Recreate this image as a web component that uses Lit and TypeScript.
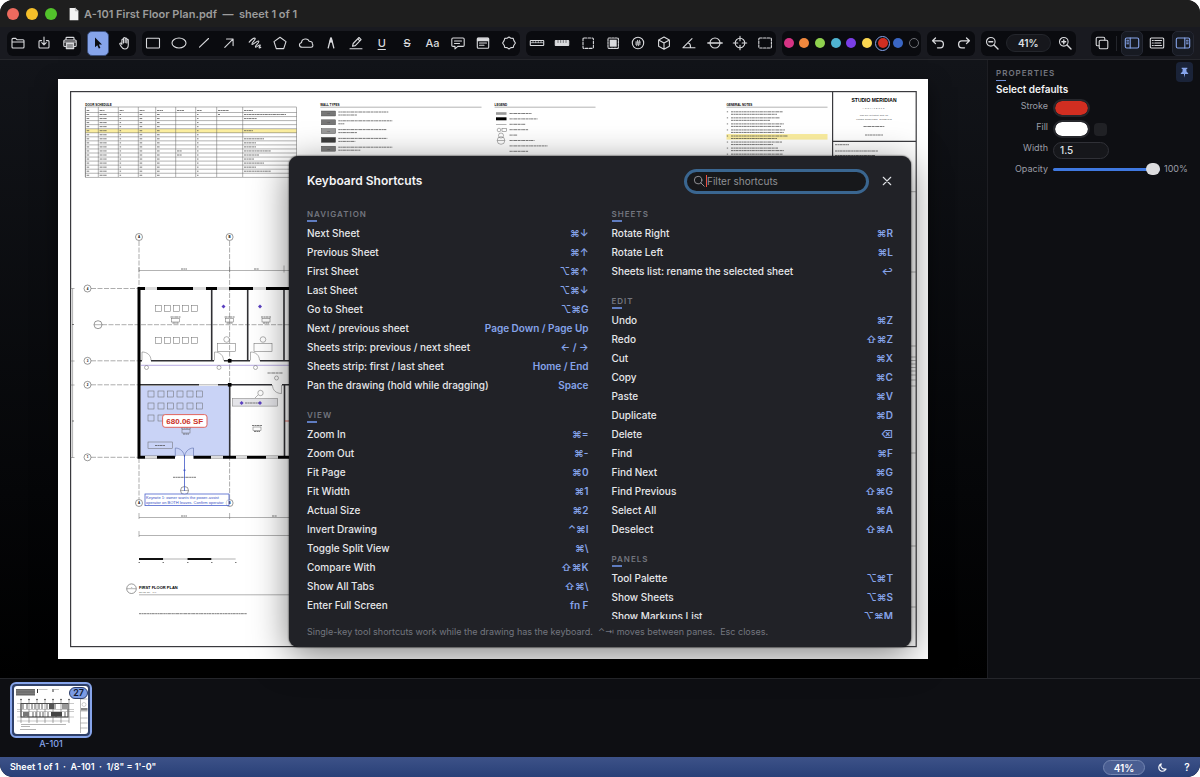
import { LitElement, html, svg, css, nothing, type TemplateResult } from "lit";
import { customElement } from "lit/decorators.js";
import { classMap } from "lit/directives/class-map.js";
import { styleMap } from "lit/directives/style-map.js";

const ICONS: Record<string, TemplateResult> = {
  folder: svg`<path d="M2 12V4.400c0-.6.4-1 1-1h2.700l1.400 1.400H13c.6 0 1 .4 1 1V12c0 .6-.4 1-1 1H3c-.6 0-1-.4-1-1zM2 7h12"/>`,
  save: svg`<path d="M5.600 5.600H4c-.6 0-1 .4-1 1V12c0 .6.4 1 1 1h8c.6 0 1-.4 1-1V6.600c0-.6-.4-1-1-1h-1.600M8 2v7.600M5.800 7.600L8 9.800l2.200-2.200"/>`,
  print: svg`<path d="M4 5V3.200c0-.5.300-.8.800-.8h6.400c.5 0 .8.300.8.800V5M4 11.500H2.800c-.6 0-1-.4-1-1V6c0-.6.4-1 1-1h10.400c.6 0 1 .4 1 1v4.500c0 .6-.4 1-1 1H12M2 7h12"/><path d="M4.300 8h7.400v5.600H4.300z" fill="currentColor"/><path d="M5.500 10h5M5.500 12h5" stroke="#0b0c10" stroke-width=".7"/>`,
  cursor: svg`<path d="M5 2.500v9.800l2.300-2.100 1.500 3.400 1.600-.7-1.500-3.300H12z" fill="currentColor" stroke="none"/>`,
  hand: svg`<path d="M4.900 9.200V5.100c0-1.300 1.600-1.300 1.600 0V8M6.500 7.500V3.600c0-1.400 1.700-1.400 1.700 0v4M8.200 7.500V3.900c0-1.300 1.600-1.300 1.600 0v4M9.800 8V5.300c0-1.200 1.500-1.200 1.500 0v4.500c0 2.600-1.300 4.200-3.500 4.200-1.900 0-2.800-.9-3.600-2.400L2.900 9.200c-.5-1 .8-1.600 1.400-.7l.6.9"/>`,
  rect: svg`<rect x="1.500" y="3.200" width="13" height="9.800" rx=".8"/>`,
  ellipse: svg`<ellipse cx="8" cy="8" rx="7" ry="5"/>`,
  line: svg`<path d="M3.500 12.200l9-8.700"/>`,
  arrow: svg`<path d="M3.800 12.300l8.200-8.200M5.500 4h6.600v6.600"/>`,
  scribble: svg`<path d="M2.200 7.200C4.500 4.600 6.800 2.600 8 3.300c1.200.9-3.900 5-3 6 .9.900 5.400-4.200 6.700-3.100 1.100 1-4.200 4.700-3.200 5.800.9.900 3.500-2.800 4.600-2 .8.7-1.600 2.100-.9 2.800.4.400 1.100-.1 1.600-.5"/>`,
  pentagon: svg`<path d="M8 2.200l6 4.400-2.300 7H4.300L2 6.600z"/>`,
  cloud: svg`<path d="M4.300 12.300c-3.500 0-3.800-4.300-.8-4.600.2-4.600 6.700-4.800 7.500-1.500 3 0 3.600 1.700 3.300 2.700 1.200 1 .6 3.400-1.400 3.400z"/>`,
  nib: svg`<path d="M7.600 3.500L5.200 12.800M8.400 3.500l2.400 9.300" stroke-width="1.300"/><path d="M7.500 2.300h1l1.200 4.700L8 7.800 6.300 7z" fill="currentColor" stroke="none"/>`,
  pencil: svg`<path d="M2 13.800h12M4.500 11.300l.7-2.800 5.800-6 2.100 2.100-5.800 6zM9.800 3.900l2 2"/>`,
  comment: svg`<path d="M3 3h10c.8 0 1.200.4 1.200 1.200v6c0 .8-.4 1.200-1.200 1.200H7.800L5 13.800v-2.400H3c-.8 0-1.200-.4-1.200-1.200v-6C1.800 3.400 2.200 3 3 3zM4.500 6h7M4.500 8.500h5"/>`,
  note: svg`<rect x="2.300" y="3" width="11.400" height="10.200" rx="1"/><path d="M2.500 3.300h11v2.300h-11z" fill="currentColor"/><path d="M4.500 8h7M4.500 10.300h4.500"/>`,
  seal: svg`<path d="M8 2l1.900 1.300 2.300.1.700 2.200L14.400 8l-1.500 2.200-.7 2.300-2.300.1L8 14l-1.900-1.400-2.300-.1-.7-2.300L1.600 8l1.500-2.400.7-2.200 2.300-.1z"/>`,
  ruler: svg`<rect x="1.300" y="5.500" width="13.400" height="5" rx=".6"/><path d="M4 5.700v2M6.700 5.700v2M9.300 5.700v2M12 5.700v2M2 7.700h12" stroke-width=".7"/>`,
  rulerFill: svg`<rect x="1.300" y="5.500" width="13.400" height="5" rx=".6" fill="currentColor"/><path d="M4 5.500v2M6.700 5.500v2M9.300 5.500v2M12 5.500v2" stroke="#0b0c10" stroke-width=".5"/>`,
  dashSquare: svg`<rect x="3" y="3" width="10.400" height="10.400" rx="1" stroke-dasharray="2.600 1.400"/>`,
  dashFill: svg`<rect x="3" y="3" width="10.400" height="10.400" rx="1" stroke-dasharray="2 1"/><path d="M4.700 4.700h7v7h-7z" fill="currentColor" stroke="none"/>`,
  hash: svg`<circle cx="8" cy="8" r="5.700"/><path d="M7.500 5.300l-.8 5.400M9.400 5.300l-.8 5.400M5.600 7.100h5M5.400 9h5" stroke-width=".9"/>`,
  cube: svg`<path d="M8 2l5.400 3v6.200L8 14.200l-5.400-3V5zM2.600 5L8 8l5.400-3M8 8v6"/>`,
  angle: svg`<path d="M14 12.700H2l9-9M7.200 7.800c1.500.7 2.500 2.600 2.300 4.700"/>`,
  diameter: svg`<circle cx="8" cy="8" r="5"/><path d="M.8 8h14.400" stroke-width="1.300"/>`,
  target: svg`<circle cx="8" cy="8" r="4.800"/><path d="M8 1.300v4.500M8 10.200v4.500M1.300 8h4.500M10.200 8h4.500"/>`,
  dashRect: svg`<rect x="1.800" y="3" width="12.600" height="10" rx="1" stroke-dasharray="2.400 1.300"/>`,
  undo: svg`<path d="M5.500 3L2.600 5.800l2.900 2.800M2.800 5.800h7.400c2 0 3.200 1.500 3.200 3.400s-1.200 3.600-3.200 3.600H7.500" stroke-width="1.300"/>`,
  redo: svg`<path d="M10.500 3l2.900 2.800-2.900 2.800M13.200 5.800H5.800c-2 0-3.200 1.500-3.200 3.400s1.200 3.600 3.200 3.600h2.700" stroke-width="1.300"/>`,
  zoomOut: svg`<circle cx="6.800" cy="6.800" r="4.300"/><path d="M10 10l4 4M4.900 6.800h3.800" stroke-width="1.400"/>`,
  zoomIn: svg`<circle cx="6.800" cy="6.800" r="4.300"/><path d="M10 10l4 4M4.900 6.800h3.800M6.800 4.900v3.800" stroke-width="1.400"/>`,
  copies: svg`<rect x="5.200" y="5.200" width="8.600" height="8.600" rx="1.400"/><path d="M5 10.800H3.600c-.9 0-1.400-.5-1.400-1.400V3.600c0-.9.5-1.400 1.400-1.400h5.800c.9 0 1.400.5 1.400 1.400V5"/>`,
  panelLeft: svg`<rect x="1.300" y="3" width="13.400" height="10" rx="1.400"/><path d="M6.200 3v10M2.900 5.200h1.600M2.900 7h1.600M2.900 8.800h1.600"/>`,
  listPanel: svg`<rect x="1.300" y="3" width="13.400" height="10" rx="1"/><path d="M3.300 5.500h1M3.300 8h1M3.300 10.500h1M5.800 5.500h6.800M5.800 8h6M5.800 10.500h6.800"/>`,
  panelRight: svg`<rect x="1.300" y="3" width="13.400" height="10" rx="1.400"/><path d="M9.800 3v10M11.500 5.200h1.600M11.500 7h1.600M11.500 8.800h1.600"/>`,
  search: svg`<circle cx="6.800" cy="6.800" r="5"/><path d="M10.500 10.500l4.500 4.500"/>`,
  close: svg`<path d="M3 3l10 10M13 3L3 13" stroke-width="1.500"/>`,
  pin: svg`<path d="M4.500 2h7v1.300l-1.300.8.5 3.300c1.300.6 1.900 1.300 1.900 2.500H8.700L8 14.500 7.300 9.900H3.400c0-1.200.6-1.900 1.900-2.500l.5-3.300-1.300-.8z" fill="currentColor" stroke="none"/>`,
  moon: svg`<path d="M6.200 2.500C4 6.500 7 11.200 13.300 10.200 10 15.500 2.800 14 2.600 8.500c0-2.700 1.500-5 3.600-6z"/>`,
  doc: svg`<path d="M3 1h6.500L13 4.500V15H3z" fill="#f2f2f2" stroke="none"/><path d="M9.500 1v3.500H13" fill="#c4c4c4" stroke="#aaa" stroke-width=".6"/>`,
};

const icon = (name: string, cls = "") => html`
  <svg class="icon ${cls}" viewBox="0 0 16 16" aria-hidden="true">${ICONS[name]}</svg>
`;

type Tool = { label: string; icon?: string; text?: string; active?: boolean; on?: boolean; sep?: boolean };

const FILE: Tool[] = [
  { label: "Open", icon: "folder" },
  { label: "Save", icon: "save" },
  { label: "Print", icon: "print" },
];
const POINTER: Tool[] = [
  { label: "Select", icon: "cursor", active: true },
  { label: "Pan", icon: "hand" },
];
const MARKUP: Tool[] = [
  { label: "Rectangle", icon: "rect" },
  { label: "Ellipse", icon: "ellipse" },
  { label: "Line", icon: "line" },
  { label: "Arrow", icon: "arrow" },
  { label: "Freehand", icon: "scribble" },
  { label: "Polygon", icon: "pentagon" },
  { label: "Cloud", icon: "cloud" },
  { label: "Pen", icon: "nib" },
  { label: "Highlighter", icon: "pencil" },
  { label: "Underline", text: "U" },
  { label: "Strikethrough", text: "S" },
  { label: "Text", text: "Aa" },
  { label: "Comment", icon: "comment" },
  { label: "Note", icon: "note" },
  { label: "Stamp", icon: "seal" },
];
const MEASURE: Tool[] = [
  { label: "Length", icon: "ruler" },
  { label: "Calibrate", icon: "rulerFill" },
  { label: "Perimeter", icon: "dashSquare" },
  { label: "Area", icon: "dashFill" },
  { label: "Count", icon: "hash" },
  { label: "Volume", icon: "cube" },
  { label: "Angle", icon: "angle" },
  { label: "Diameter", icon: "diameter" },
  { label: "Center", icon: "target" },
  { label: "Marquee", icon: "dashRect" },
];
const PANELS: Tool[] = [
  { label: "Split view", icon: "copies", sep: true },
  { label: "Sheets panel", icon: "panelLeft", on: true },
  { label: "Markups list", icon: "listPanel" },
  { label: "Properties panel", icon: "panelRight", on: true },
];
const COLORS = ["#d63384", "#f0883e", "#8fd14f", "#4fb3d1", "#7a3ee6", "#fbd650", "#d12e21", "#3a66c4", "none"];

type Section = { title: string; rows: [string, string][] };
const LEFT: Section[] = [
  {
    title: "Navigation",
    rows: [
      ["Next Sheet", "⌘↓"],
      ["Previous Sheet", "⌘↑"],
      ["First Sheet", "⌥⌘↑"],
      ["Last Sheet", "⌥⌘↓"],
      ["Go to Sheet", "⌥⌘G"],
      ["Next / previous sheet", "Page Down / Page Up"],
      ["Sheets strip: previous / next sheet", "← / →"],
      ["Sheets strip: first / last sheet", "Home / End"],
      ["Pan the drawing (hold while dragging)", "Space"],
    ],
  },
  {
    title: "View",
    rows: [
      ["Zoom In", "⌘="],
      ["Zoom Out", "⌘-"],
      ["Fit Page", "⌘0"],
      ["Fit Width", "⌘1"],
      ["Actual Size", "⌘2"],
      ["Invert Drawing", "⌃⌘I"],
      ["Toggle Split View", "⌘\\"],
      ["Compare With", "⇧⌘K"],
      ["Show All Tabs", "⇧⌘\\"],
      ["Enter Full Screen", "fn F"],
    ],
  },
];
const RIGHT: Section[] = [
  {
    title: "Sheets",
    rows: [
      ["Rotate Right", "⌘R"],
      ["Rotate Left", "⌘L"],
      ["Sheets list: rename the selected sheet", "↩"],
    ],
  },
  {
    title: "Edit",
    rows: [
      ["Undo", "⌘Z"],
      ["Redo", "⇧⌘Z"],
      ["Cut", "⌘X"],
      ["Copy", "⌘C"],
      ["Paste", "⌘V"],
      ["Duplicate", "⌘D"],
      ["Delete", "⌫"],
      ["Find", "⌘F"],
      ["Find Next", "⌘G"],
      ["Find Previous", "⇧⌘G"],
      ["Select All", "⌘A"],
      ["Deselect", "⇧⌘A"],
    ],
  },
  {
    title: "Panels",
    rows: [
      ["Tool Palette", "⌥⌘T"],
      ["Show Sheets", "⌥⌘S"],
      ["Show Markups List", "⌥⌘M"],
    ],
  },
];

/** The first floor plan sheet. */
@customElement("plan-sheet")
export class PlanSheet extends LitElement {
  static styles = css`
    :host { display: block; }
    svg { display: block; width: 100%; height: auto; font-family: "Liberation Sans", Arial, sans-serif; }
    .thin { fill: none; stroke: #666; stroke-width: 0.5; }
    .mid { fill: none; stroke: #3a3a3e; stroke-width: 1.2; }
    .grid { fill: none; stroke: #8a8a8a; stroke-width: 0.7; stroke-dasharray: 5 1.5; }
    .bubble { fill: #fff; stroke: #555; stroke-width: 0.6; }
    .copy { fill: none; stroke: #444; stroke-width: 1; stroke-dasharray: 2.4 0.4 1.4 0.3 3.1 0.5; opacity: 0.7; }
    .win { fill: #dcdcdc; }
    .outer { fill: none; stroke: #000; stroke-width: 3; }
    .inner { fill: none; stroke: #303034; stroke-width: 1.6; }
    .gap { stroke: #fff; stroke-width: 2.4; }
    .h { font-size: 3px; font-weight: 700; }
    .mini { font-size: 2px; fill: #444; }
    .title { font-size: 5px; font-weight: 700; text-anchor: middle; }
    .c { text-anchor: middle; }
  `;

  private schedule() {
    const xs = [85.3, 98.3, 118.3, 138.3, 155.7, 175.7, 195.7, 216.7, 242.7];
    const len = [3, 7, 1.5, 3, 3, 0, 1.5, 0, 0];
    const rem = [42, 13, 0, 0, 9, 0, 20, 12, 12, 27, 15, 10, 20, 12, 27, 0];
    return svg`
      <rect x="85.300" y="129" width="211.400" height="4" fill="#fbeea0" />
      ${Array.from({ length: 16 }, (_, r) => {
        const y = 112.5 + r * 4.05;
        return svg`<path class="thin" d="M85.300 ${y}H296.700" />
          ${xs.map((x, c) => {
            const w = c === 8 ? rem[r] : r === 0 && c === 7 ? 2 : (r === 9 || r === 10) && c === 5 ? 5 : len[c];
            return w ? svg`<path class="copy" d="M${x + 1.3} ${y + 2}h${w}" />` : nothing;
          })}`;
      })}
      ${xs.map((x, c) => svg`<path class="thin" d="M${x} 107V177" /><path class="copy" d="M${x + 1.3} 110.500h${[3, 5, 4, 5, 6, 7, 5, 11, 9][c]}" />`)}
      <rect class="thin" x="85.300" y="107" width="211.400" height="70.200" />
    `;
  }

  private chairs(xs: number[], y: number) {
    return xs.map((x) => svg`<rect class="thin" x="${x - 3}" y="${y - 3}" width="6" height="6" />`);
  }

  private bubble(x: number, y: number, t: string) {
    return svg`<circle class="bubble" cx=${x} cy=${y} r="3.500" /><text class="h c" x=${x} y=${y + 1}>${t}</text>`;
  }

  private room(x: number, y: number) {
    return svg`<path class="copy" d="M${x - 5} ${y}h10M${x - 3} ${y + 6}h6" /><rect class="thin" x=${x - 4} y=${y + 1.5} width="8" height="3.500" />`;
  }

  render() {
    return html`
      <svg viewBox="58 79 870 580" role="img" aria-label="A-101 First Floor Plan">
        <rect x="58" y="79" width="870" height="580" fill="#fff" />
        <rect class="mid" x="70.600" y="91.600" width="845.600" height="555" />
        <path class="mid" d="M832.600 91.600V647M832.600 141.300H916" />
        <path class="thin" d="M832 191.700H916M832 272H916M832 346H916M832 357H916M832 360.500H916M832 364H916M832 367.500H916M832 371H916M832 375H916M832 380H916M832 386H916M832 453H916M832 546H916M832 607H916" />

        <text class="h" x="85.300" y="105.800">DOOR SCHEDULE</text>
        ${this.schedule()}

        <text class="h" x="320.300" y="105.800">WALL TYPES</text>
        <path class="thin" d="M320.300 107.200H481.500" />
        ${["#777", "#777", "#999", "#3c3c3c", "#7c7c7c"].map((f, i) => {
          const y = 111 + i * 8.8;
          return svg`<rect x="321.300" y=${y} width="14.300" height="5" fill=${f} stroke="#444" stroke-width=".4" />
            <text class="mini c" x="328.400" y=${y + 3.3}>W${i + 1}</text>
            <path class="copy" d="M338.300 ${y + 1}h${[50, 54, 48, 49, 54][i]}M338.300 ${y + 4}h${[19, 6, 19, 17, 22][i]}" />`;
        })}

        <text class="h" x="494.600" y="105.800">LEGEND</text>
        <path class="thin" d="M494.600 107.200H595.500" />
        <rect x="496" y="112.200" width="10.500" height="2.600" fill="#999" />
        <rect x="496" y="117.300" width="10.500" height="3" />
        <path class="thin" d="M496 124.500h10.500" />
        <circle class="thin" cx="499" cy="130" r="1.800" />
        <rect class="thin" x="502" y="128.500" width="4.600" height="3" />
        <circle class="thin" cx="501" cy="135.500" r="2.500" />
        <circle class="thin" cx="501" cy="140.500" r="3.800" />
        <path class="thin" d="M497.200 140.500h7.600" />
        ${[22, 28, 16, 19, 8, 25, 38, 19].map((w, i) => svg`<path class="copy" d="M509.500 ${113.5 + i * 5.4}h${w}" />`)}

        <text class="h" x="726.500" y="105.800">GENERAL NOTES</text>
        <path class="thin" d="M726.500 107.200H827.500" />
        <rect x="726.500" y="134" width="101" height="5.600" fill="#fbeea0" />
        ${Array.from({ length: 8 }, (_, i) => {
          const y = 111.8 + i * 6.05;
          return svg`<path class="copy" d="M726.800 ${y}h1.300M731 ${y}h${[52, 49, 53, 54, 57, 51, 47, 52][i]}M731 ${y + 2.5}h${[46, 39, 50, 53, 46, 42, 53, 40][i]}" />`;
        })}

        <text class="title" x="874" y="101.800">STUDIO MERIDIAN</text>
        <text class="mini c" x="874" y="108.700" letter-spacing="1">ARCHITECTS</text>
        <text class="mini c" x="874" y="116">1010 NW Hoyt Street, Suite 400</text>
        <text class="mini c" x="874" y="120">Portland, Oregon 97209 · 503 555 0142</text>
        <path class="copy" d="M863.500 126.500h21M865 135h18" />
        <path class="copy" d="M835 144.700h14M835 151h43M835 155.500h40" />

        <path class="grid" d="M139 241V288M139 458V499M229.600 241V499M91 288.500H139M102 324.700H290M91 360.800H139M91 384.800H139M91 457.300H139" />
        <path class="thin" d="M139 270.500H290M139 267.500v5M229.600 265.500v7M284 265.500v7M139 517.500H290M139 513v6M229.600 513v6M139 535.500H290M139 531v6" />
        <path class="thin" d="M72.600 288.500V457.500M70.500 288.500h4M70.500 361h4M70.500 385h4M70.500 457.500h4" />
        <path class="copy" d="M181 269h6M254 269h5M181 516h6M272 516h5M72 324.500h2M72 421h2" />

        <rect x="140.500" y="386" width="88.500" height="70" fill="#c9d3f6" />
        <path d="M141 365.300H290" stroke="#9b8ad8" stroke-width=".7" />
        <path class="inner" d="M211.700 288.500V361M247.700 288.500V361M284 288.500V361M139 360.800H290M139 384.800H290M229.700 384.800V457M284.500 384.800V457" />
        <path class="gap" d="M142 360.800h9M214 360.800h10M250 360.800h10M199 384.800h19M272 384.800h10" />
        <path class="thin" d="M199 384.800h19" />
        <path class="thin" d="M142 360.500v-8.500c5 0 9 3 9 8.500M214.500 360.500v-8.500c5 0 9 3 9 8.500M250.500 360.500v-8.500c5 0 9 3 9 8.500M281.500 385v8.500c-5 0-9-3-9-8.500" />
        <path class="outer" d="M290 288.500H139V457.300H290" />
        ${[[145, 12], [193, 13], [217, 12], [253, 13]].map(([x, w]) => svg`<rect class="win" x=${x} y="287" width=${w} height="3" />`)}
        ${[[145, 12], [211, 12], [236, 11], [266, 12]].map(([x, w]) => svg`<rect class="win" x=${x} y="455.800" width=${w} height="3" />`)}
        <rect x="175" y="455.500" width="18.500" height="3.600" fill="#fff" />
        <rect x="227.900" y="359" width="3.600" height="3.600" />
        <rect x="227.900" y="383" width="3.600" height="3.600" />
        <path d="M175.300 457v-9c5 0 9 4 9.200 9c.2-5 4.200-9 9-9v9" fill="none" stroke="#5b6ba8" stroke-width=".6" />

        ${this.chairs([158.5, 167.5, 176.5, 185.5, 194.5], 308.5)}
        ${this.chairs([158.5, 167.5, 176.5, 185.5, 194.5], 340.5)}
        ${this.chairs([151, 161, 170.5, 180, 190, 199.5], 394)}
        ${this.chairs([151, 161, 170.5, 180, 190, 199.5], 406)}
        ${this.chairs([151, 161], 418)}
        <rect class="thin" x="148" y="442" width="24.500" height="6.500" />
        <path class="copy" d="M155 445.500h10" />
        ${this.room(175.5, 317)}${this.room(229.6, 317)}${this.room(266, 317)}${this.room(257, 425.5)}${this.room(186, 428)}
        ${[226.6, 263].map((x) => svg`<circle class="thin" cx=${x} cy="339.500" r="2.800" /><rect class="thin" x=${x - 9} y="343.700" width="18" height="8" />`)}
        <circle class="thin" cx="146.500" cy="367.500" r="2" /><circle class="thin" cx="219" cy="367.500" r="2" /><circle class="thin" cx="255.500" cy="367.500" r="2" />
        <path class="copy" d="M267.500 373h15" /><circle class="thin" cx="276.500" cy="378" r="2" />
        <rect x="232.300" y="398.500" width="45.400" height="7.600" fill="#e4e4e8" stroke="#777" stroke-width=".5" />
        <path class="copy" d="M245 403h16" />
        <circle class="thin" cx="260.500" cy="393" r="2.700" /><path class="thin" d="M258 395l-3 3" />
        ${[[223.5, 306.5], [260, 306.5], [241.6, 403], [260, 403]].map(([x, y]) => svg`<path d="M${x} ${y - 2}l2 2-2 2-2-2z" fill="#5a3fc0" />`)}
        <path d="M285 421h5" stroke="#d12e21" stroke-width=".7" />

        <rect x="162.600" y="414.600" width="44.400" height="12.700" rx="2.500" fill="#fff" stroke="#e0564d" stroke-width=".9" />
        <text class="c" x="184.800" y="424" font-size="8" font-weight="700" fill="#c92f26">680.06 SF</text>

        <path class="copy" d="M173 477.300h23" />
        <circle class="bubble" cx="184.500" cy="490.500" r="4" /><path class="thin" d="M180.500 490.500h8" />
        <path d="M184.500 455v36" stroke="#3f57c6" stroke-width=".8" />
        <circle cx="184.500" cy="470.300" r="1" fill="#3f57c6" />
        ${this.bubble(139, 237, "A")}${this.bubble(229.6, 237, "B")}${this.bubble(139, 503, "A")}${this.bubble(229.6, 503, "B")}
        ${this.bubble(87.5, 288.5, "4")}${this.bubble(87.5, 360.8, "3")}${this.bubble(87.5, 384.8, "2")}${this.bubble(87.5, 457.3, "1")}
        <circle class="bubble" cx="98" cy="324.700" r="4" /><path class="thin" d="M94 324.700h8" />
        <rect x="145" y="494" width="84" height="11.600" fill="#fff" fill-opacity=".6" stroke="#4a62cc" stroke-width=".8" />
        <text x="146" y="499" font-size="4" fill="#3550c4">Keynote 1: owner wants the power-assist</text>
        <text x="146" y="504" font-size="4" fill="#3550c4">operator on BOTH leaves. Confirm operator</text>

        <path d="M139 559h24.300M187.300 559h24.300" stroke="#111" stroke-width="2" />
        <path d="M163.300 559h24M211.600 559h24" stroke="#d8d8d8" stroke-width="2" />
        <path class="copy" d="M138.500 562.500h1.500M162.500 562.500h1.500M187 562.500h1.500M211 562.500h1.500M235 562.500h1.500" />
        <circle class="bubble" cx="131.500" cy="588.700" r="4.800" /><path class="thin" d="M126.700 588.700h9.600" />
        <text class="mini c" x="131.500" y="587.700">1</text>
        <text x="139" y="589" font-size="4" font-weight="700">FIRST FLOOR PLAN</text>
        <text class="mini" x="139" y="593">SCALE: 1/8" = 1'-0"</text>
        <path class="thin" d="M139 594.800H290" />
        <path class="copy" d="M139 613.700h108" />
      </svg>
    `;
  }
}

@customElement("shortcut-column")
export class ShortcutColumn extends LitElement {
  static properties = { sections: { attribute: false } };
  declare sections: Section[];
  static styles = css`
    :host { display: flex; flex-direction: column; gap: 13px; }
    h2 {
      margin: 0 0 2px; font-size: 8px; line-height: 14px; font-weight: 600; letter-spacing: 1px;
      text-transform: uppercase; color: #73767f;
    }
    h2::after { content: ""; display: block; width: 10px; height: 2px; margin: -1px 0 0; background: #5f7cc0; }
    dl { margin: 0; }
    .row { display: flex; justify-content: space-between; line-height: 19px; font-size: 10px; white-space: nowrap; }
    dt { color: #e6e7ea; font-weight: 500; }
    dd { margin: 0; }
    kbd { font: inherit; font-weight: 600; color: #86a4ea; }
  `;
  render() {
    return this.sections.map(
      (s) => html`
        <section>
          <h2>${s.title}</h2>
          <dl>
            ${s.rows.map(([name, keys]) => html`<div class="row"><dt>${name}</dt><dd><kbd>${keys}</kbd></dd></div>`)}
          </dl>
        </section>
      `
    );
  }
}

@customElement("app-root")
export class AppRoot extends LitElement {
  static styles = css`
    :host {
      display: block; height: 100vh; background: #fff; color: #dfe1e5;
      font: 10px/14px Inter, "Liberation Sans", "DejaVu Sans", sans-serif;
    }
    * { box-sizing: border-box; }
    button { font: inherit; color: inherit; border: 0; padding: 0; background: none; }
    .icon { display: block; width: 16px; height: 16px; fill: none; stroke: currentColor; stroke-width: 1.1; stroke-linecap: round; stroke-linejoin: round; }
    .window { position: relative; display: flex; flex-direction: column; height: 100%; overflow: hidden; border-radius: 13px; background: #0f1013; }

    .titlebar { display: flex; align-items: center; gap: 7px; height: 27px; padding: 0 7px; background: #1e1e1e; flex: none; }
    .light { width: 12px; height: 12px; border-radius: 50%; }
    .light.r { background: #ec6a5e; }
    .light.y { background: #f4bf2a; }
    .light.g { background: #52c22b; }
    .titlebar .doc { width: 14px; height: 14px; margin: 0 -4px 0 3px; }
    .titlebar h1 { margin: 0; font-size: 11px; font-weight: 600; color: #9c9c9c; white-space: pre; }

    .toolbar { display: flex; align-items: center; gap: 6px; height: 33px; padding: 0 6px 0 7px; background: #191a20; border-bottom: 1px solid #26272c; flex: none; }
    .group { display: flex; align-items: center; justify-content: space-between; min-width: 0; height: 25px; border-radius: 6px; background: #0a0b0f; }
    .group.last { margin-left: 9px; }
    .tool { display: grid; place-items: center; width: 22px; height: 25px; border-radius: 5px; color: #d9dadd; }
    .tool.active { background: #86a4ea; color: #0b0c10; border: 1px solid #3b4f7c; }
    .tool.on { background: #171a22; color: #86a4ea; border: 1px solid #252833; }
    .glyph { font-size: 11px; font-weight: 500; }
    .glyph.U { text-decoration: underline; text-underline-offset: 2px; }
    .glyph.S { text-decoration: line-through; }
    .sep { width: 1px; height: 15px; background: #24262c; }
    .swatch { display: grid; place-items: center; width: 13px; height: 13px; border-radius: 50%; }
    .swatch.sel { outline: 1px solid #86a4ea; }
    .dot { width: 10px; height: 10px; border-radius: 50%; }
    .dot.none { border: 1px solid #6d6f75; }
    .zoom { width: 45px; height: 18px; border: 1px solid #24262c; border-radius: 9px; background: #16171c; font-weight: 600; text-align: center; }

    .work { display: flex; flex: 1; min-height: 0; }
    .canvas { flex: 1; display: flex; align-items: center; justify-content: center; min-width: 0; padding: 0 59px 0 58px; background: linear-gradient(#121419, #050608 70%, #000); }
    .canvas plan-sheet { flex: 1; box-shadow: 0 8px 20px #0008; }

    .props { width: 213px; padding: 2px 7px 0 8px; background: #0e0f13; border-left: 1px solid #1d1e23; }
    .props header { display: flex; justify-content: space-between; align-items: flex-start; }
    .props h2 { margin: 4px 0 0; font-size: 8px; line-height: 14px; font-weight: 600; letter-spacing: 1px; color: #73767f; }
    .props h2::after { content: ""; display: block; width: 10px; height: 1px; background: #6f8fd8; }
    .pin { display: grid; place-items: center; width: 17px; height: 20px; border-radius: 4px; background: #1a2338; color: #86a4ea; }
    .pin .icon { width: 13px; height: 13px; }
    .props h3 { margin: 0 0 3px; font-size: 10px; line-height: 14px; font-weight: 600; color: #f2f3f5; }
    .fields { display: grid; grid-template-columns: 52px 1fr; column-gap: 5px; row-gap: 3px; align-items: center; }
    .fields > label { text-align: right; color: #9a9da6; font-size: 9px; line-height: 12px; padding-bottom: 5px; }
    .fields > label.flat { padding: 0; }
    .well { display: flex; align-items: center; gap: 4px; height: 18px; }
    input[type="color"] { appearance: none; width: 37px; height: 18px; padding: 0; border: 2px solid #26272c; border-radius: 9px; background: none; overflow: hidden; }
    input[type="color"]::-webkit-color-swatch-wrapper { padding: 0; }
    input[type="color"]::-webkit-color-swatch { border: 0; border-radius: 7px; }
    .clear { width: 13px; height: 13px; border-radius: 4px; background: #202125; }
    .num { width: 56px; height: 17px; border: 1px solid #303137; border-radius: 9px; background: #16171b; color: #dfe1e5; font: inherit; font-weight: 500; padding: 0 6px; }
    .slide { display: flex; align-items: center; gap: 4px; color: #9a9da6; font-size: 9px; }
    input[type="range"] { appearance: none; width: 107px; height: 14px; margin: 0; background: none; }
    input[type="range"]::-webkit-slider-runnable-track { height: 3px; border-radius: 2px; background: #3f78e0; }
    input[type="range"]::-webkit-slider-thumb { appearance: none; width: 14px; height: 12px; margin-top: -5px; border-radius: 6px; background: #dcdcde; }

    .strip { height: 79px; flex: none; padding: 3px 10px; border-top: 1px solid #25262b; background: #0e0f13; }
    .thumb { position: relative; display: flex; flex-direction: column; align-items: center; width: 82px; color: #86a4ea; font-size: 9px; font-weight: 500; line-height: 12px; }
    .frame { display: block; width: 82px; height: 56px; padding: 2px; border: 2px solid #86a4ea; border-radius: 6px; background: #2f4069; }
    .frame svg { display: block; width: 100%; height: 100%; border-radius: 3px; background: #fff; }
    .badge { position: absolute; top: 5px; right: 4px; height: 12px; padding: 0 3px; border: 1px solid #2c3d68; border-radius: 6px; background: #7b9be4; color: #10182e; line-height: 10px; font-weight: 600; }

    .status { display: flex; align-items: center; height: 20px; flex: none; padding: 0 5px 0 10px; background: linear-gradient(#3d5288, #294078); color: #fff; font-size: 9px; font-weight: 600; white-space: pre; }
    .status .end { display: flex; align-items: center; gap: 9px; margin-left: auto; font-size: 10px; }
    .status .end button { display: grid; place-items: center; width: 16px; height: 15px; }
    .status .end .pill { width: 42px; border: 1px solid #7385b0; border-radius: 8px; background: #4a5e92; }
    .status .icon { width: 11px; height: 11px; stroke-width: 1.5; }

    .overlay { position: absolute; inset: 27px 0 2px; display: flex; align-items: center; justify-content: center; }
    .dialog { display: flex; flex-direction: column; width: 622px; max-width: 96%; height: 491px; max-height: 96%; border-radius: 9px; background: #212227; box-shadow: 0 8px 36px rgb(0 0 0 / 50%), 0 0 2px #000; }
    .dialog > header { display: flex; align-items: center; padding: 13px 14px 13px 18px; }
    .dialog h1 { margin: 0 auto 0 0; font-size: 12px; line-height: 16px; font-weight: 600; color: #f2f3f5; }
    .search { display: flex; align-items: center; width: 185px; height: 25px; margin-right: 8px; padding: 0 6px; border: 3px solid #3a6690; border-radius: 13px; background: #17181b; }
    .search .icon { width: 12px; height: 12px; margin-right: 1px; color: #a7a8ac; }
    .caret { width: 1px; height: 12px; background: #f0503c; }
    .search input { flex: 1; min-width: 0; padding: 0; border: 0; outline: 0; background: none; color: inherit; font: inherit; }
    .search input::placeholder { color: #8f9095; opacity: 1; }
    .close { display: grid; place-items: center; width: 20px; height: 20px; }
    .close .icon { width: 12px; height: 12px; }
    .columns { display: grid; grid-template-columns: 1fr 1fr; gap: 23px; flex: 1; min-height: 0; overflow: hidden; padding: 0 18px; }
    .dialog footer { padding: 6px 18px 8px; font-size: 9px; line-height: 14px; color: #73767f; white-space: pre; }
  `;

  private tools(items: Tool[], width: number, cls = "") {
    return html`
      <div class="group ${cls}" style=${styleMap({ flex: `${width} 1 0px` })}>
        ${items.map(
          (t) => html`
            <button class=${classMap({ tool: true, active: !!t.active, on: !!t.on })} aria-label=${t.label}>
              ${t.icon ? icon(t.icon) : html`<span class="glyph ${t.text!}">${t.text}</span>`}
            </button>
            ${t.sep ? html`<span class="sep"></span>` : nothing}
          `
        )}
      </div>
    `;
  }

  private thumbnail() {
    const cols = [7, 15, 23, 31, 39, 47, 55];
    return html`
      <svg viewBox="0 0 74 48" preserveAspectRatio="none" aria-hidden="true">
        <rect x="2" y="3" width="19" height="6.500" fill="#666" />
        <path d="M2 4.500h19M2 6h19M2 7.500h19" stroke="#aaa" stroke-width=".3" />
        <path d="M23.500 3v4M39 3v3" stroke="#333" stroke-width="1" />
        <path d="M24.500 3.500h9M40 3.500h5" stroke="#aaa" stroke-width=".7" />
        <path d="M66.500 1V47M66.500 13h7M66.500 25h7M66.500 32h7M66.500 37h7M66.500 42h7" stroke="#777" stroke-width=".5" />
        <rect x="67" y="22" width="6.500" height="2.500" fill="#888" />
        <circle cx="70" cy="18.500" r="2" fill="none" stroke="#888" stroke-width=".4" />
        <rect x="7" y="17.500" width="47" height="13.500" fill="none" stroke="#222" stroke-width=".9" />
        <path d="M3 17.500h57M3 23.500h57M3 25.500h57M3 31h57M3 35h52" stroke="#777" stroke-width=".4" />
        ${cols.map((x) => svg`<path d="M${x} 14V37" stroke="#555" stroke-width=".5" /><circle cx=${x} cy="13.500" r=".8" fill="#333" />`)}
        ${[9, 13, 18, 21, 25, 28, 33, 41, 50].map((x) => svg`<path d="M${x} 18v5M${x + 1} 26v5" stroke="#333" stroke-width=".8" />`)}
        <rect x="35" y="18" width="5" height="5" fill="#555" /><rect x="9" y="26" width="6" height="4.500" fill="#777" />
        <rect x="37" y="26" width="11" height="4.500" fill="#444" /><rect x="48" y="18" width="6" height="5" fill="#999" />
        <path d="M7 38.500h45M7 40.500h9M6 43.500h16" stroke="#666" stroke-width=".5" />
      </svg>
    `;
  }

  render() {
    return html`
      <div class="window">
        <div class="titlebar">
          <span class="light r"></span><span class="light y"></span><span class="light g"></span>
          ${icon("doc", "doc")}
          <h1>A-101 First Floor Plan.pdf  —  sheet 1 of 1</h1>
        </div>

        <div class="toolbar" role="toolbar">
          ${this.tools(FILE, 74)} ${this.tools(POINTER, 49)} ${this.tools(MARKUP, 377)} ${this.tools(MEASURE, 250)}
          <div class="group" style=${styleMap({ flex: "138 1 0px" })}>
            ${COLORS.map(
              (c) => html`
                <button class=${classMap({ swatch: true, sel: c === "#d12e21" })} aria-label="Color ${c}">
                  <span class=${classMap({ dot: true, none: c === "none" })} style=${styleMap({ background: c })}></span>
                </button>
              `
            )}
          </div>
          ${this.tools([{ label: "Undo", icon: "undo" }, { label: "Redo", icon: "redo" }], 48)}
          <div class="group" style=${styleMap({ flex: "95 1 0px" })}>
            <button class="tool" aria-label="Zoom out">${icon("zoomOut")}</button>
            <button class="zoom">41%</button>
            <button class="tool" aria-label="Zoom in">${icon("zoomIn")}</button>
          </div>
          ${this.tools(PANELS, 103, "last")}
        </div>

        <div class="work">
          <main class="canvas"><plan-sheet></plan-sheet></main>
          <aside class="props">
            <header>
              <h2>PROPERTIES</h2>
              <button class="pin" aria-label="Pin panel">${icon("pin")}</button>
            </header>
            <h3>Select defaults</h3>
            <div class="fields">
              <label for="stroke">Stroke</label>
              <div class="well"><input id="stroke" type="color" value="#d12e21" /></div>
              <label for="fill">Fill</label>
              <div class="well"><input id="fill" type="color" value="#ffffff" /><button class="clear" aria-label="No fill"></button></div>
              <label for="width">Width</label>
              <div class="well"><input id="width" class="num" type="text" value="1.5" /></div>
              <label for="opacity" class="flat">Opacity</label>
              <div class="slide"><input id="opacity" type="range" min="0" max="100" value="100" /><span>100%</span></div>
            </div>
          </aside>
        </div>

        <div class="strip">
          <button class="thumb">
            <span class="frame">${this.thumbnail()}</span>
            <span class="badge">27</span>
            <span>A-101</span>
          </button>
        </div>

        <footer class="status">
          <span>Sheet 1 of 1  ·  A-101  ·  1/8" = 1'-0"</span>
          <div class="end"><button class="pill">41%</button><button aria-label="Dark mode">${icon("moon")}</button><button aria-label="Help">?</button></div>
        </footer>

        <div class="overlay">
          <div class="dialog" role="dialog" aria-labelledby="dialog-title">
            <header>
              <h1 id="dialog-title">Keyboard Shortcuts</h1>
              <label class="search">
                ${icon("search")}<span class="caret"></span>
                <input type="text" placeholder="Filter shortcuts" aria-label="Filter shortcuts" />
              </label>
              <button class="close" aria-label="Close">${icon("close")}</button>
            </header>
            <div class="columns">
              <shortcut-column .sections=${LEFT}></shortcut-column>
              <shortcut-column .sections=${RIGHT}></shortcut-column>
            </div>
            <footer>Single-key tool shortcuts work while the drawing has the keyboard.  ⌃⇥ moves between panes.  Esc closes.</footer>
          </div>
        </div>
      </div>
    `;
  }
}
